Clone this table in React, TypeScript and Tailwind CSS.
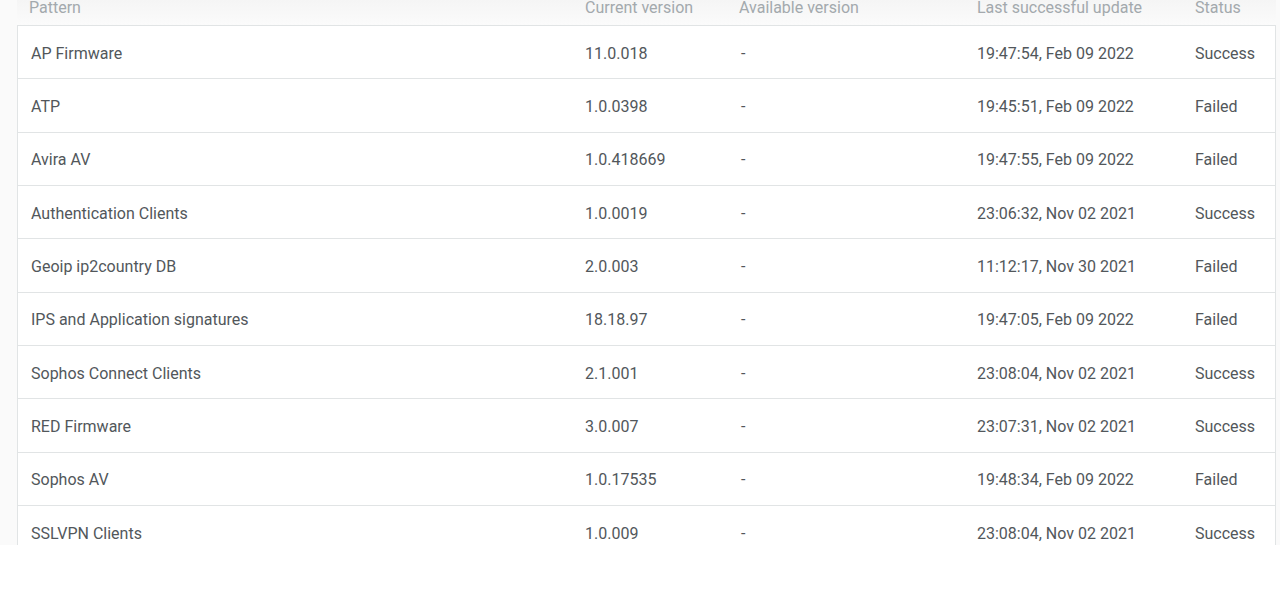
const rows = [
  { name: 'AP Firmware', current: '11.0.018', updated: '19:47:54, Feb 09 2022', status: 'Success' },
  { name: 'ATP', current: '1.0.0398', updated: '19:45:51, Feb 09 2022', status: 'Failed' },
  { name: 'Avira AV', current: '1.0.418669', updated: '19:47:55, Feb 09 2022', status: 'Failed' },
  { name: 'Authentication Clients', current: '1.0.0019', updated: '23:06:32, Nov 02 2021', status: 'Success' },
  { name: 'Geoip ip2country DB', current: '2.0.003', updated: '11:12:17, Nov 30 2021', status: 'Failed' },
  { name: 'IPS and Application signatures', current: '18.18.97', updated: '19:47:05, Feb 09 2022', status: 'Failed' },
  { name: 'Sophos Connect Clients', current: '2.1.001', updated: '23:08:04, Nov 02 2021', status: 'Success' },
  { name: 'RED Firmware', current: '3.0.007', updated: '23:07:31, Nov 02 2021', status: 'Success' },
  { name: 'Sophos AV', current: '1.0.17535', updated: '19:48:34, Feb 09 2022', status: 'Failed' },
  { name: 'SSLVPN Clients', current: '1.0.009', updated: '23:08:04, Nov 02 2021', status: 'Success' },
];

// column widths match the reference grid
const cols = 'grid grid-cols-[554px_154px_238px_218px_1fr]';

export default function App() {
  return (
    <div className="w-[1280px] h-[589px] bg-white font-['Roboto',sans-serif]">
      <div className="h-[545px] overflow-hidden bg-[#fafafa] pl-[17px] pr-[4px]">
        {/* Header, scrolled partly out of view */}
        <div className={`${cols} h-[25px] bg-gradient-to-b from-[#f5f5f5] to-[#fbfbfb] text-[16px] leading-[16px] text-[#a3a9ad]`}>
          <div className="pl-[12px]">Pattern</div>
          <div className="pl-[14px]">Current version</div>
          <div className="pl-[14px]">Available version</div>
          <div className="pl-[14px]">Last successful update</div>
          <div className="pl-[14px]">Status</div>
        </div>

        {/* Body */}
        <div className="border-x border-t border-[#e1e4e5] bg-white text-[16px] text-[#52575b]">
          {rows.map(row => (
            <div key={row.name} className={`${cols} h-[53.33px] items-center pt-[3px] border-b border-[#e1e4e5]`}>
              <div className="pl-[13px]">{row.name}</div>
              <div className="pl-[13px]">{row.current}</div>
              <div className="pl-[15px]">-</div>
              <div className="pl-[13px]">{row.updated}</div>
              <div className="pl-[13px]">{row.status}</div>
            </div>
          ))}
        </div>
      </div>
    </div>
  );
}
